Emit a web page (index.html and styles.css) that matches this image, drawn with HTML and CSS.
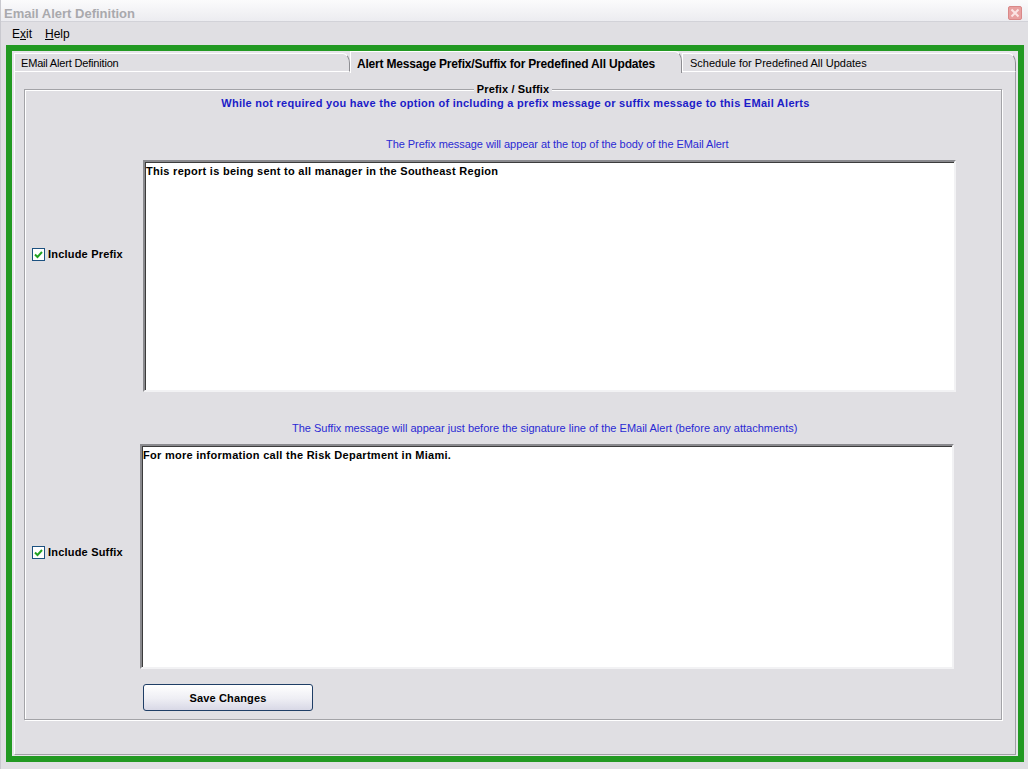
FILE: index.html
```html
<!DOCTYPE html>
<html lang="en">
<head>
  <meta charset="UTF-8">
  <meta name="viewport" content="width=device-width, initial-scale=1.0">
  <title>Email Alert Definition</title>
  <link rel="stylesheet" href="styles.css">
</head>
<body>
  <div class="window">
    <div class="title-bar">
      <span class="title">Email Alert Definition</span>
      <span class="close-btn">
        <svg width="10" height="10" viewBox="0 0 10 10"><path d="M1.5 1.5 L8.5 8.5 M8.5 1.5 L1.5 8.5" stroke="#fbe4e4" stroke-width="2" fill="none"/></svg>
      </span>
    </div>
    <div class="menu-bar">
      <span class="menu-item">E<u>x</u>it</span>
      <span class="menu-item"><u>H</u>elp</span>
    </div>
    <div class="frame">
      <div class="tabs">
        <div class="tab tab-first">EMail Alert Definition</div>
        <div class="tab tab-active">Alert Message Prefix/Suffix for Predefined All Updates</div>
        <div class="tab tab-last">Schedule for Predefined All Updates</div>
      </div>
      <div class="panel">
        <fieldset class="group">
          <legend>Prefix / Suffix</legend>
          <p class="intro">While not required you have the option of including a prefix message or suffix message to this EMail Alerts</p>

          <p class="note note-prefix">The Prefix message will appear at the top of the body of the EMail Alert</p>
          <div class="msg-row row-prefix">
            <label class="check">
              <span class="box"><svg width="11" height="11" viewBox="0 0 11 11"><path d="M2 5.5 L4.5 8 L9 3" stroke="#21a121" stroke-width="2" fill="none"/></svg></span>
              Include Prefix
            </label>
            <textarea class="msg msg-prefix">This report is being sent to all manager in the Southeast Region</textarea>
          </div>

          <p class="note note-suffix">The Suffix message will appear just before the signature line of the EMail Alert (before any attachments)</p>
          <div class="msg-row row-suffix">
            <label class="check">
              <span class="box"><svg width="11" height="11" viewBox="0 0 11 11"><path d="M2 5.5 L4.5 8 L9 3" stroke="#21a121" stroke-width="2" fill="none"/></svg></span>
              Include Suffix
            </label>
            <textarea class="msg msg-suffix">For more information call the Risk Department in Miami.</textarea>
          </div>

          <div class="actions">
            <button class="save-btn">Save Changes</button>
          </div>
        </fieldset>
      </div>
    </div>
  </div>
</body>
</html>
```

FILE: styles.css
```css
body, html {
  margin: 0;
  padding: 0;
  width: 1028px;
  height: 769px;
  overflow: hidden;
  font-family: "Liberation Sans", Arial, sans-serif;
  font-size: 11px;
  background: #f4f4f6;
}
.window {
  width: 1028px;
  height: 769px;
  display: flex;
  flex-direction: column;
  background: #e0dfe3;
  box-sizing: border-box;
  border-left: 1px solid #c9c9cf;
}
.title-bar {
  height: 22px;
  display: flex;
  align-items: center;
  justify-content: space-between;
  padding: 6px 6px 0 3px;
  background: linear-gradient(#fbfbfc, #ececf0);
  border-bottom: 1px solid #d2d2d8;
  box-sizing: border-box;
}
.title {
  font-size: 13px;
  font-weight: bold;
  color: #a9a9ad;
}
.close-btn {
  width: 14px;
  height: 14px;
  margin-top: -2px;
  display: flex;
  align-items: center;
  justify-content: center;
  background: #e8a0a0;
  border: 1px solid #d98888;
  border-radius: 2px;
  box-sizing: border-box;
}
.menu-bar {
  height: 23px;
  display: flex;
  align-items: center;
  gap: 13px;
  padding-left: 11px;
  font-size: 12px;
  color: #000;
}
.frame {
  width: 1018px;
  height: 717px;
  margin-left: 5px;
  border: 6px solid #229922;
  box-sizing: border-box;
  display: flex;
  flex-direction: column;
  padding: 0 2px 1px 2px;
  background: #e6e5e9;
}
.tabs {
  display: flex;
  height: 21px;
  align-items: flex-end;
}
.tab {
  height: 19px;
  box-sizing: border-box;
  padding: 3px 0 0 6px;
  background: #e0dfe3;
  border-top: 1px solid #fff;
  border-left: 1px solid #fff;
  border-right: 1px solid #8d8d92;
  border-bottom: 1px solid #fff;
  border-top-right-radius: 7px 10px;
  white-space: nowrap;
}
.tab-first {
  width: 336px;
  letter-spacing: -0.18px;
}
.tab-active {
  width: 332px;
  height: 22px;
  margin-bottom: -1px;
  padding: 5px 0 0 6px;
  font-size: 12px;
  font-weight: bold;
  letter-spacing: -0.19px;
  border-bottom: none;
  position: relative;
  z-index: 1;
}
.tab-last {
  width: 334px;
  padding-left: 7px;
}
.panel {
  flex: 1;
  background: #e0dfe3;
  border-left: 1px solid #fff;
  border-right: 1px solid #a0a0a4;
  border-bottom: 1px solid #a0a0a4;
  padding: 11px 13px 0 9px;
}
.group {
  margin: 0;
  padding: 0 0 8px 0;
  min-width: 0;
  border: 1px solid #a3a3a7;
  box-shadow: 1px 1px 0 #fff, inset 1px 1px 0 #fff;
}
.group legend {
  margin: 0 auto;
  padding: 0 3px;
  font-weight: bold;
  letter-spacing: 0.15px;
  line-height: 13px;
  background: #e0dfe3;
}
.intro {
  margin: 1px 0 0;
  padding-left: 5px;
  text-align: center;
  font-weight: bold;
  letter-spacing: 0.27px;
  line-height: 13px;
  color: #1c1cc8;
}
.note {
  margin: 0;
  line-height: 12px;
  color: #2a2ad4;
  white-space: nowrap;
}
.note-prefix {
  margin-top: 28px;
  padding-left: 361px;
  letter-spacing: -0.05px;
}
.note-suffix {
  margin-top: 30px;
  padding-left: 267px;
}
.msg-row {
  display: grid;
  margin-top: 10px;
}
.row-prefix {
  grid-template-columns: 118px 813px;
}
.row-suffix {
  grid-template-columns: 115px 814px;
}
.check {
  display: flex;
  align-items: center;
  gap: 3px;
  align-self: start;
  padding-left: 7px;
  font-weight: bold;
  letter-spacing: 0.2px;
  line-height: 13px;
}
.row-prefix .check {
  margin-top: 88px;
}
.row-suffix .check {
  margin-top: 102px;
}
.box {
  width: 13px;
  height: 13px;
  box-sizing: border-box;
  border: 1px solid #1c5180;
  background: #fff;
  display: flex;
  align-items: center;
  justify-content: center;
}
.msg {
  display: block;
  box-sizing: border-box;
  margin: 0;
  resize: none;
  background: #fff;
  border: 2px solid;
  border-color: #8a8a8e #f2f2f4 #f2f2f4 #8a8a8e;
  box-shadow: inset 1px 1px 0 #3c3c3c;
  padding: 2px 1px;
  font-family: "Liberation Sans", Arial, sans-serif;
  font-size: 11px;
  font-weight: bold;
  letter-spacing: 0.28px;
  line-height: 14px;
  color: #000;
}
.msg-prefix {
  height: 232px;
}
.msg-suffix {
  height: 225px;
}
.actions {
  margin: 15px 0 0 118px;
}
.save-btn {
  width: 170px;
  height: 27px;
  border: 1px solid #1f3e66;
  border-radius: 3px;
  background: linear-gradient(#ffffff, #eeeef4 55%, #d8d8e6);
  font-family: "Liberation Sans", Arial, sans-serif;
  font-size: 11px;
  font-weight: bold;
  letter-spacing: 0.15px;
  color: #000;
  padding: 0;
}
```
